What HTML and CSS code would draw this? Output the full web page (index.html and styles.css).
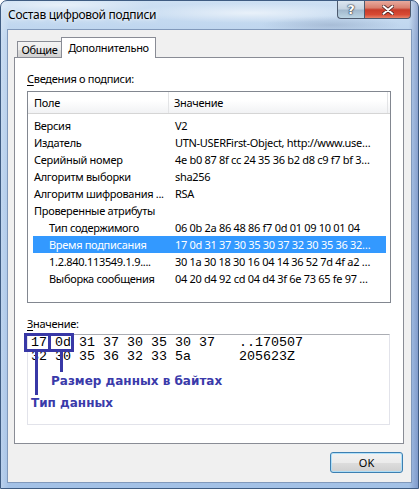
FILE: index.html
```html
<!DOCTYPE html>
<html lang="ru">
<head>
<meta charset="utf-8">
<title>Состав цифровой подписи</title>
<link rel="stylesheet" href="styles.css">
</head>
<body>
<div class="window">
  <div class="titlebar">
    <span class="title">Состав цифровой подписи</span>
    <div class="caption-btns">
      <div class="cbtn help"><span class="q">?</span></div>
      <div class="cbtn close">
        <svg width="12" height="10" viewBox="0 0 12 10">
          <path d="M1.5 1.2 L10.5 8.8 M10.5 1.2 L1.5 8.8" stroke="#4a2020" stroke-width="3.6" stroke-linecap="round"/>
          <path d="M1.5 1.2 L10.5 8.8 M10.5 1.2 L1.5 8.8" stroke="#ffffff" stroke-width="2" stroke-linecap="round"/>
        </svg>
      </div>
    </div>
  </div>
  <div class="client">
    <div class="tabs">
      <div class="tab">Общие</div>
      <div class="tab active">Дополнительно</div>
    </div>
    <div class="panel">
      <div class="label"><u>С</u>ведения о подписи:</div>
      <div class="list">
        <div class="lv-header">
          <div class="hcol h1">Поле</div>
          <div class="hcol h2">Значение</div>
        </div>
        <div class="rows">
          <div class="row"><span class="c1">Версия</span><span class="c2">V2</span></div>
          <div class="row"><span class="c1">Издатель</span><span class="c2">UTN-USERFirst-Object, http://www.use…</span></div>
          <div class="row"><span class="c1">Серийный номер</span><span class="c2">4e b0 87 8f cc 24 35 36 b2 d8 c9 f7 bf 3…</span></div>
          <div class="row"><span class="c1">Алгоритм выборки</span><span class="c2">sha256</span></div>
          <div class="row"><span class="c1">Алгоритм шифрования ...</span><span class="c2">RSA</span></div>
          <div class="row"><span class="c1">Проверенные атрибуты</span><span class="c2"></span></div>
          <div class="row child"><span class="c1">Тип содержимого</span><span class="c2">06 0b 2a 86 48 86 f7 0d 01 09 10 01 04</span></div>
          <div class="row child selected"><span class="c1">Время подписания</span><span class="c2">17 0d 31 37 30 35 30 37 32 30 35 36 32…</span></div>
          <div class="row child"><span class="c1">1.2.840.113549.1.9....</span><span class="c2">30 1a 30 18 30 16 04 14 36 52 7d 4f a2 …</span></div>
          <div class="row child"><span class="c1">Выборка сообщения</span><span class="c2">04 20 d4 92 cd 04 d4 3f 6e 73 65 fe 97 …</span></div>
        </div>
      </div>
      <div class="label value-label"><u>З</u>начение:</div>
      <div class="edit">
        <pre class="hex">17 0d 31 37 30 35 30 37   ..170507
32 30 35 36 32 33 5a      205623Z</pre>
        <div class="mark mark-type"></div>
        <div class="mark mark-len"></div>
        <div class="stem stem-type"></div>
        <div class="stem stem-len"></div>
        <div class="note note-len">Размер данных в байтах</div>
        <div class="note note-type">Тип данных</div>
      </div>
    </div>
    <div class="buttons">
      <button class="btn">OK</button>
    </div>
  </div>
</div>
</body>
</html>
```

FILE: styles.css
```css
* { box-sizing: border-box; }

html, body {
  margin: 0;
  padding: 0;
}

body {
  width: 419px;
  height: 489px;
  overflow: hidden;
  font-family: "Noto Sans", "Open Sans", sans-serif;
  font-size: 11px;
  letter-spacing: -0.3px;
  color: #000;
  background: #ffffff;
}

.window {
  width: 419px;
  height: 489px;
  display: flex;
  flex-direction: column;
  border: 1px solid #3f5c82;
  border-radius: 7px 7px 0 0;
  background:
    radial-gradient(ellipse 120px 10px at 250px 12px, rgba(255,255,255,0.6), rgba(255,255,255,0) 100%),
    radial-gradient(ellipse 90px 8px at 60px 4px, rgba(255,255,255,0.55), rgba(255,255,255,0) 100%),
    radial-gradient(ellipse 70px 9px at 330px 24px, rgba(120,140,170,0.35), rgba(120,140,170,0) 100%),
    linear-gradient(90deg, rgba(255,255,255,0.25) 0px, rgba(255,255,255,0) 8px, rgba(255,255,255,0) 408px, rgba(60,80,150,0.35) 417px),
    linear-gradient(180deg, #cde0f3 0%, #bad2ed 8%, #adc9ea 40%, #a3c1e6 100%);
}

.titlebar {
  height: 28px;
  display: flex;
  align-items: flex-start;
  padding-left: 7px;
}

.title {
  margin-top: 6px;
  line-height: 16px;
  font-size: 12px;
  letter-spacing: -0.3px;
  color: #000;
  text-shadow: 0 0 6px rgba(255,255,255,0.9), 0 0 3px rgba(255,255,255,0.9);
}

.caption-btns {
  margin-left: auto;
  margin-right: 7px;
  display: flex;
  height: 18px;
}

.cbtn {
  height: 18px;
  display: flex;
  align-items: center;
  justify-content: center;
  border: 1px solid #4d5a6e;
  border-top: none;
}

.help {
  width: 27px;
  border-radius: 0 0 0 4px;
  border-right: none;
  background: linear-gradient(180deg, #dce6f0 0%, #c6d4e2 45%, #a2b9cd 55%, #bcd5e4 100%);
}

.help .q {
  font-family: "DejaVu Sans", sans-serif;
  font-weight: bold;
  font-size: 13px;
  line-height: 13px;
  letter-spacing: 0;
  color: #ffffff;
  text-shadow: 0 0 1px #2b3444, 0 0 1px #2b3444, 0 0 2px #2b3444;
}

.close {
  width: 47px;
  border-radius: 0 0 4px 0;
  background: linear-gradient(180deg, #e8aa9e 0%, #d9806f 40%, #c83c2a 52%, #d84a34 80%, #e6826a 100%);
}

.close svg { display: block; }

.client {
  flex: 1;
  margin: 0 6px 5px 6px;
  border: 1px solid #8199bb;
  background: #f0f0f0;
  padding: 7px 7px 0 6px;
  display: flex;
  flex-direction: column;
}

.tabs {
  display: flex;
  align-items: flex-end;
  height: 21px;
  margin-bottom: -1px;
  padding-left: 3px;
}

.tab {
  height: 17px;
  width: 44px;
  border: 1px solid #898c95;
  border-right: none;
  border-bottom: none;
  background: linear-gradient(180deg, #f4f4f4 0%, #ebebeb 50%, #dddddd 51%, #cfcfcf 100%);
  line-height: 15px;
  text-align: center;
  font-size: 11px;
}

.tab.active {
  position: relative;
  z-index: 1;
  height: 21px;
  width: 95px;
  border-right: 1px solid #898c95;
  background: #ffffff;
  line-height: 19px;
}

.panel {
  height: 387px;
  border: 1px solid #898c95;
  background: #ffffff;
  padding: 13px 13px 0 12px;
}

.label {
  height: 16px;
  line-height: 16px;
  margin-bottom: 4px;
}

.label u { text-decoration-thickness: 1px; text-underline-offset: 2px; }

.list {
  width: 364px;
  height: 212px;
  border: 1px solid #828790;
  background: #ffffff;
  overflow: hidden;
}

.lv-header {
  display: flex;
  height: 22px;
  border-bottom: 1px solid #d5d5d5;
  background: linear-gradient(180deg, #ffffff 0%, #ffffff 40%, #f1f2f4 100%);
}

.hcol {
  line-height: 21px;
  padding-left: 6px;
  border-right: 1px solid #e3e4e6;
}

.h1 { width: 141px; }
.h2 { width: 219px; padding-left: 5px; }

.rows {
  padding-top: 3px;
}

.row {
  display: flex;
  height: 17px;
  line-height: 17px;
  margin-left: 5px;
  width: 353px;
  white-space: nowrap;
}

.row .c1 {
  width: 136px;
  padding-left: 1px;
  overflow: hidden;
}

.row.child .c1 { padding-left: 16px; }

.row .c2 {
  width: 217px;
  padding-left: 6px;
  overflow: hidden;
}

.row.selected {
  background: #3399ff;
  color: #ffffff;
}

.value-label {
  margin-top: 13px;
  margin-bottom: 2px;
}

.edit {
  position: relative;
  width: 363px;
  height: 91px;
  border: 1px solid #e2e3ea;
  border-top-color: #abadb3;
  background: #ffffff;
}

.hex {
  margin: 0;
  padding: 1px 0 0 3px;
  font-family: "Liberation Mono", "Courier New", monospace;
  font-size: 13.33px;
  line-height: 14px;
  letter-spacing: 0;
  color: #000;
}

.mark {
  position: absolute;
  top: -2px;
  height: 19px;
  border: 3px solid #3838a6;
}

.mark-type { left: -4px; width: 27px; }
.mark-len { left: 20px; width: 26px; }

.stem {
  position: absolute;
  top: 17px;
  width: 3px;
  background: #3838a6;
}

.stem-type { left: 7px; height: 43px; }
.stem-len { left: 32px; height: 20px; }

.note {
  position: absolute;
  font-family: "DejaVu Sans", sans-serif;
  font-weight: bold;
  font-size: 12px;
  line-height: 14px;
  letter-spacing: 0;
  color: #3a3aaa;
  white-space: nowrap;
}

.note-len { left: 23px; top: 39px; }
.note-type { left: 3px; top: 61px; }

.buttons {
  display: flex;
  justify-content: flex-end;
  padding-top: 8px;
  padding-right: 1px;
}

.btn {
  width: 73px;
  height: 21px;
  padding: 0;
  font-family: "Noto Sans", "Open Sans", sans-serif;
  font-size: 11px;
  letter-spacing: 0;
  color: #000;
  border: 1px solid #3c7fb1;
  border-radius: 3px;
  background: linear-gradient(180deg, #f2f2f2 0%, #ebebeb 50%, #dddddd 51%, #cfcfcf 100%);
  box-shadow: inset 0 0 0 1px rgba(170, 222, 250, 0.9);
}
```
